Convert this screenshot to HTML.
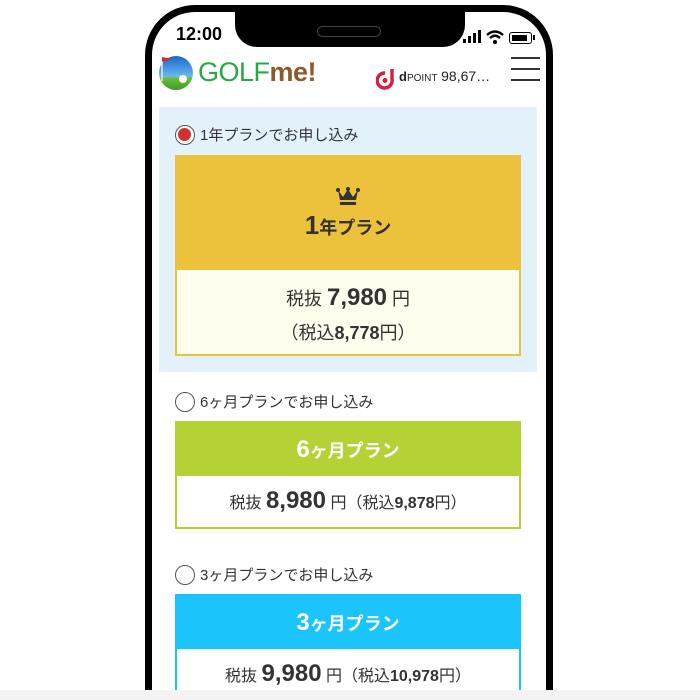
<!DOCTYPE html>
<html style="width:700px;height:700px;overflow:hidden"><head><meta charset="utf-8"><style>
*{margin:0;padding:0;box-sizing:border-box}
body{width:700px;height:700px;background:#fff;position:relative;overflow:hidden;font-family:"Liberation Sans","Noto Sans CJK JP",sans-serif;color:#333}
.a{position:absolute}
.wrap{position:absolute;left:0;top:0;width:700px;height:700px;overflow:hidden}
.phone{left:145px;top:5px;width:408px;height:695px;border:7px solid #000;border-bottom:0;border-radius:50px 50px 0 0;background:#fff}
.notch{left:235px;top:5px;width:230px;height:42px;background:#000;border-radius:0 0 22px 22px}
.spk{left:317px;top:26px;width:64px;height:11px;border:1.5px solid #444;border-radius:6px}
.radio{width:20px;height:20px;border:1.5px solid #555;border-radius:50%;background:#fff}
.lbl{font-size:15px;color:#333}
.card{left:175px;width:346px}
.hd{position:absolute;left:0;right:0;top:0;text-align:center;color:#fff;font-weight:bold}
.bd{position:absolute;left:0;right:0;text-align:center}
</style></head><body><div class="wrap">
<div class="a phone"></div>
<div class="a notch"></div>
<div class="a spk"></div>
<div class="a" style="left:176px;top:24px;font-size:18px;font-weight:bold;color:#000">12:00</div>
<div class="a" style="left:463px;top:39px;width:3px;height:4px;background:#000"></div>
<div class="a" style="left:468px;top:36px;width:3px;height:7px;background:#000"></div>
<div class="a" style="left:473px;top:33px;width:3px;height:10px;background:#000"></div>
<div class="a" style="left:478px;top:30px;width:3px;height:13px;background:#000"></div>
<svg class="a" style="left:485px;top:29px" width="20" height="16" viewBox="0 0 20 16"><path d="M2 6 Q10 -1 18 6" stroke="#000" stroke-width="2.3" fill="none"/><path d="M5 9 Q10 4.5 15 9" stroke="#000" stroke-width="2.3" fill="none"/><circle cx="10" cy="13" r="2" fill="#000"/></svg>
<div class="a" style="left:509px;top:32px;width:23px;height:12px;border:1.5px solid #000;border-radius:3px"><div style="margin:1.5px;width:15px;height:6px;background:#000"></div></div>
<div class="a" style="left:533px;top:35px;width:2px;height:5px;background:#000"></div>
<svg class="a" style="left:157px;top:53px" width="38" height="38" viewBox="0 0 38 38"><defs><linearGradient id="g" x1="0" y1="0" x2="0" y2="1"><stop offset="0" stop-color="#1a66c8"/><stop offset=".6" stop-color="#6ab8ee"/><stop offset=".65" stop-color="#6dbf3b"/><stop offset="1" stop-color="#3f9a2a"/></linearGradient></defs><circle cx="19" cy="20" r="17" fill="url(#g)"/><line x1="5" y1="4" x2="5" y2="28" stroke="#fff" stroke-width="1.2"/><path d="M5 4 L15 6 L5 9Z" fill="#d92a2a"/><circle cx="26" cy="26" r="4" fill="#fff"/></svg>
<div class="a" style="left:198px;top:57px;font-size:27px;letter-spacing:-0.5px"><span style="color:#27a844">GOLF</span><span style="color:#8b5a2b;font-weight:bold">me!</span></div>
<svg class="a" style="left:376px;top:68px" width="18" height="22" viewBox="0 0 18 22"><path d="M9 5 A7.5 7.5 0 1 0 16 11 L16 1" stroke="#d61d3c" stroke-width="3.4" fill="none"/><circle cx="9" cy="12.5" r="2.5" fill="#d61d3c"/></svg>
<div class="a" style="left:399px;top:68px;font-size:13px;font-weight:bold;color:#222">d<span style="font-size:10px;font-weight:normal">POINT</span> <span style="font-size:14px;font-weight:normal">98,67…</span></div>
<div class="a" style="left:511px;top:57px;width:29px;height:2px;background:#333"></div>
<div class="a" style="left:511px;top:68px;width:29px;height:2px;background:#333"></div>
<div class="a" style="left:511px;top:79px;width:29px;height:2px;background:#333"></div>
<div class="a" style="left:159px;top:107px;width:378px;height:265px;background:#e3f1fb"></div>
<div class="a radio" style="left:175px;top:125px"><div style="margin:2px;width:13px;height:13px;border-radius:50%;background:#d32f2f"></div></div>
<div class="a lbl" style="left:200px;top:124px">1年プランでお申し込み</div>
<div class="a card" style="top:155px;height:201px;border:2px solid #e8c244;background:#fffdee">
 <div class="hd" style="height:113px;background:#ecc23c;color:#333">
  <svg style="margin-top:30px" width="24" height="18" viewBox="0 0 24 18"><path d="M2 3 L7 10 L12 2 L17 10 L22 3 L20 13 L4 13Z" fill="#333"/><rect x="4" y="15" width="16" height="3" fill="#333"/><circle cx="2" cy="3" r="2" fill="#333"/><circle cx="12" cy="2" r="2" fill="#333"/><circle cx="22" cy="3" r="2" fill="#333"/></svg>
  <div style="font-size:18px"><span style="font-size:26px">1</span>年プラン</div>
 </div>
 <div class="bd" style="top:127px;font-size:18px">税抜 <b style="font-size:24px">7,980</b> 円</div>
 <div class="bd" style="top:162px;font-size:18px">（税込<b>8,778</b>円）</div>
</div>
<div class="a radio" style="left:175px;top:392px"></div>
<div class="a lbl" style="left:200px;top:391px">6ヶ月プランでお申し込み</div>
<div class="a card" style="top:421px;height:108px;border:2px solid #b4d136;background:#fff">
 <div class="hd" style="height:53px;background:#b4d136;line-height:53px;font-size:18px"><span style="font-size:24px">6</span>ヶ月プラン</div>
 <div class="bd" style="top:64px;font-size:16px">税抜 <b style="font-size:24px">8,980</b> 円（税込<b>9,878</b>円）</div>
</div>
<div class="a radio" style="left:175px;top:565px"></div>
<div class="a lbl" style="left:200px;top:564px">3ヶ月プランでお申し込み</div>
<div class="a card" style="top:594px;height:106px;border:2px solid #1cc4fc;border-bottom:0;background:#fff">
 <div class="hd" style="height:53px;background:#1cc4fc;line-height:53px;font-size:18px"><span style="font-size:24px">3</span>ヶ月プラン</div>
 <div class="bd" style="top:64px;font-size:16px">税抜 <b style="font-size:24px">9,980</b> 円（税込<b>10,978</b>円）</div>
</div>
<div class="a" style="left:0;top:690px;width:700px;height:10px;background:#f3f3f3"></div>
</div></body></html>
